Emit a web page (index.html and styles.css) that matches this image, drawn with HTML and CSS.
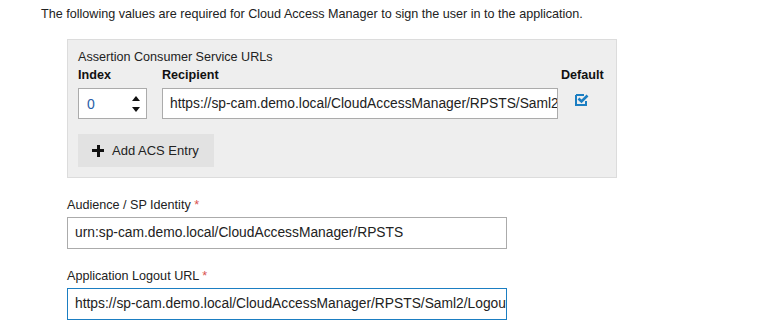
FILE: index.html
```html
<!DOCTYPE html>
<html lang="en">

<head>
    <meta charset="UTF-8">
    <meta name="viewport" content="width=device-width, initial-scale=1.0">
    <title>SAML settings</title>
    <link rel="stylesheet" href="styles.css">
</head>

<body>
    <div class="page">
        <p class="intro">The following values are required for Cloud Access Manager to sign the user in to the application.</p>

        <div class="form">
            <!-- ACS list -->
            <div class="acs">
                <div class="acs-title">Assertion Consumer Service URLs</div>
                <div class="acs-grid">
                    <div class="col-head">Index</div>
                    <div class="col-head">Recipient</div>
                    <div class="col-head">Default</div>

                    <div class="spin">
                        <span class="spin-val">0</span>
                        <span class="spin-btns">
                            <svg width="8" height="5" viewBox="0 0 8 5"><path d="M0 5 L4 0 L8 5 Z" /></svg>
                            <svg width="8" height="5" viewBox="0 0 8 5"><path d="M0 0 L4 5 L8 0 Z" /></svg>
                        </span>
                    </div>
                    <div class="field recipient">https://sp-cam.demo.local/CloudAccessManager/RPSTS/Saml2</div>
                    <div class="check">
                        <svg width="14" height="12" viewBox="0 0 14 12">
                            <path d="M1 1 H9 M1 1 V11 H11 V7" fill="none" stroke="#1b7ec2" stroke-width="2" />
                            <path d="M3.5 4.5 L6.5 7.5 L12.5 1.5" fill="none" stroke="#1b7ec2" stroke-width="2.6" />
                        </svg>
                    </div>
                </div>
                <a class="btn"><span class="plus"></span>Add ACS Entry</a>
            </div>

            <label class="lbl">Audience / SP Identity <span class="req">*</span></label>
            <div class="field">urn:sp-cam.demo.local/CloudAccessManager/RPSTS</div>

            <label class="lbl">Application Logout URL <span class="req">*</span></label>
            <div class="field focus">https://sp-cam.demo.local/CloudAccessManager/RPSTS/Saml2/Logout</div>
        </div>
    </div>
</body>

</html>
```

FILE: styles.css
```css
* {
    margin: 0;
    padding: 0;
    box-sizing: border-box;
}

body {
    background: #fff;
    color: #222;
    font-family: "Liberation Sans", Arial, sans-serif;
    font-size: 12.6px;
}

.page {
    padding: 5px 0 0 41px;
}

.intro {
    line-height: 18px;
}

.form {
    margin: 16px 0 0 26px;
    width: 550px;
}

.acs {
    background-color: #eeeeee;
    border: 1px solid #dcdcdc;
    padding: 8px 10px 10px;
}

.acs-title {
    line-height: 18px;
}

.acs-grid {
    display: grid;
    grid-template-columns: 84px 399px 1fr;
}

.col-head {
    font-weight: bold;
    color: #111;
    line-height: 18px;
    margin-bottom: 4px;
}

.spin {
    width: 69px;
    height: 31px;
    background: #fff;
    border: 1px solid #ababab;
    display: flex;
    align-items: center;
    justify-content: space-between;
    padding: 0 6px 0 8px;
    font-size: 14px;
}

.spin-val {
    color: #2a5ea8;
}

.spin-btns {
    display: flex;
    flex-direction: column;
    gap: 6px;
}

.spin-btns svg {
    display: block;
    fill: #111;
}

.field {
    height: 32px;
    width: 440px;
    background: #fff;
    border: 1px solid #ababab;
    padding: 0 7px;
    font-size: 13.8px;
    line-height: 30px;
    white-space: nowrap;
    overflow: hidden;
    color: #222;
}

.field.recipient {
    width: 396px;
    height: 31px;
    line-height: 29px;
}

.field.focus {
    border-color: #1b7ec2;
}

.check {
    padding: 6px 0 0 14px;
}

.btn {
    display: inline-flex;
    align-items: center;
    margin-top: 15px;
    height: 33px;
    padding: 0 15px 0 14px;
    background-color: #e2e2e2;
    font-size: 13px;
    color: #222;
    cursor: pointer;
}

.plus {
    width: 12px;
    height: 12px;
    margin-right: 8px;
    background: linear-gradient(#111, #111) center / 12px 3px no-repeat,
        linear-gradient(#111, #111) center / 3px 12px no-repeat;
}

.lbl {
    display: block;
    line-height: 18px;
    margin: 18px 0 3px;
}

.req {
    color: #d9534f;
}
```
